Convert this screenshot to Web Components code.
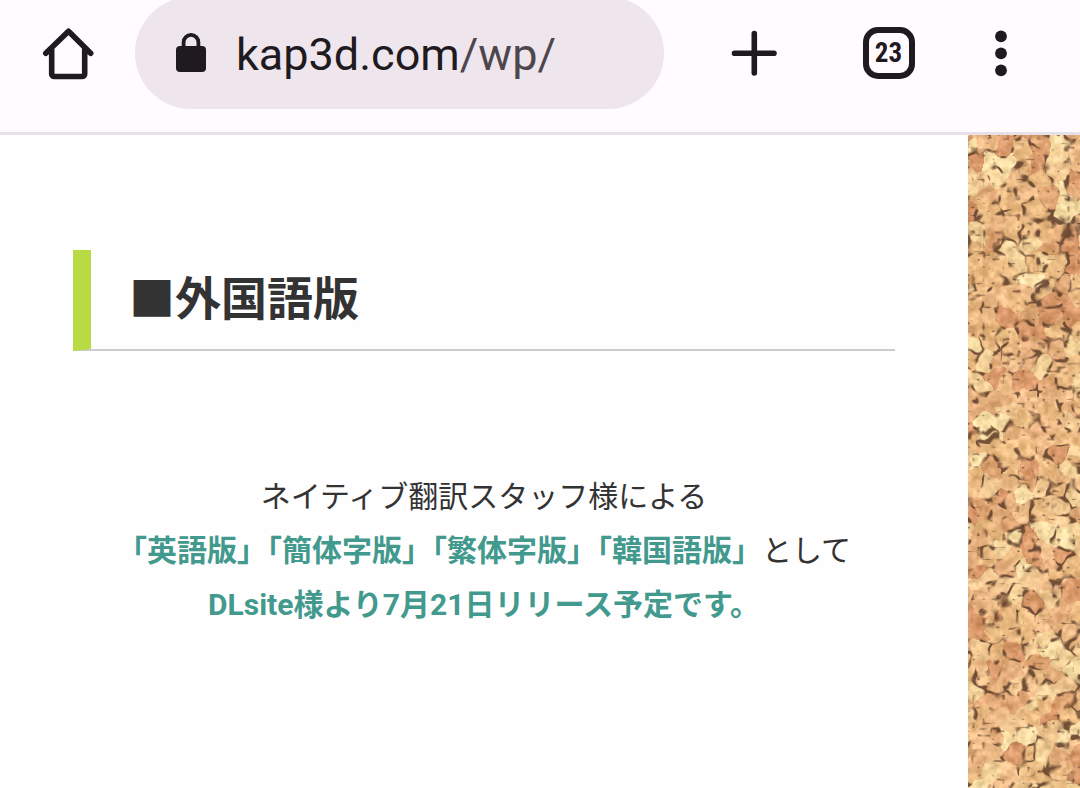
<!DOCTYPE html>
<html lang="ja">
<head>
<meta charset="utf-8">
<meta name="viewport" content="width=device-width, initial-scale=1">
<title>kap3d.com/wp/</title>
<style>
  html, body { margin: 0; min-height: 100%; }
  body { font-family: Roboto, "Noto Sans CJK JP", sans-serif; color: #333; background: #fffefe; }
</style>
</head>
<body>
<mobile-browser>
  <browser-toolbar slot="toolbar">
    <address-pill slot="address" host="kap3d.com" path="/wp/"></address-pill>
  </browser-toolbar>
  <article-section>
    <span slot="title">■外国語版</span>
    <release-note>
      ネイティブ翻訳スタッフ様による<br>
      <strong>「英語版」「簡体字版」「繁体字版」「韓国語版」</strong>として<br>
      <strong>DLsite様より7月21日リリース予定です。</strong>
    </release-note>
  </article-section>
  <cork-board slot="side"></cork-board>
</mobile-browser>

<script>
const define = (name, html, setup) => {
  const template = document.createElement('template');
  template.innerHTML = html;
  customElements.define(name, class extends HTMLElement {
    constructor() {
      super();
      this.attachShadow({ mode: 'open' }).append(template.content.cloneNode(true));
    }
    connectedCallback() { if (setup) setup(this, this.shadowRoot); }
  });
};

define('mobile-browser', `
  <style>
    :host { display: flex; flex-direction: column; min-height: 100vh; }
    .page { flex: 1; display: grid; grid-template-columns: minmax(0, 1fr) 112px; }
    main { background: #fffefe; }
  </style>
  <slot name="toolbar"></slot>
  <div class="page">
    <main><slot></slot></main>
    <slot name="side"></slot>
  </div>`);

define('browser-toolbar', `
  <style>
    :host { display: block; overflow: hidden; background: #fffbff; border-bottom: 3px solid #e7e0e8; color: #1f1a1f; }
    nav { display: flex; align-items: center; height: 106px; padding: 0 34px 26px 0; }
    ::slotted(*) { flex: 1; margin-right: 22px; }
    button { flex: none; width: 135px; height: 106px; padding: 0; border: 0; background: none; color: inherit;
      display: flex; align-items: center; justify-content: center; }
    .menu { width: 90px; }
    svg { display: block; width: 56px; height: 56px; overflow: visible; }
    .count { box-sizing: border-box; width: 52px; height: 52px; border: 6px solid; border-radius: 15px;
      display: flex; align-items: center; justify-content: center;
      font: bold 27px/40px "Roboto Condensed", Roboto, sans-serif; }
  </style>
  <nav aria-label="ブラウザ">
    <button aria-label="ホーム"><svg viewBox="0 0 56 56" fill="none" stroke="currentColor" stroke-width="5.6" stroke-linecap="round" stroke-linejoin="round"><path d="M5.800 28.300 28.500 6.300l22.200 22M11.700 24.500V49a2.500 2.500 0 0 0 2.500 2.500h28a2.500 2.500 0 0 0 2.500-2.500V24.500"/></svg></button>
    <slot name="address"></slot>
    <button aria-label="新しいタブ"><svg viewBox="0 0 56 56" fill="none" stroke="currentColor" stroke-width="5.6" stroke-linecap="round"><path d="M28.300 8.500v39.500M8.500 28.300h39.500"/></svg></button>
    <button aria-label="タブ一覧"><span class="count">23</span></button>
    <button class="menu" aria-label="メニュー"><svg viewBox="0 0 56 56" fill="currentColor"><circle cx="28" cy="11.300" r="5.900"/><circle cx="28" cy="28.300" r="5.900"/><circle cx="28" cy="45.300" r="5.900"/></svg></button>
  </nav>`);

define('address-pill', `
  <style>
    :host { display: block; min-width: 0; }
    button { box-sizing: border-box; display: flex; align-items: center; gap: 29px; width: 100%; height: 112px;
      padding: 4px 40px 0; border: 0; border-radius: 56px; background: #eee6ec; color: #1f1a1f;
      font: 400 45px/56px Roboto, sans-serif; text-align: left; white-space: nowrap; }
    svg { flex: none; width: 32px; height: 44px; }
    .path { color: #4e464d; }
  </style>
  <button aria-label="アドレスバー">
    <svg viewBox="0 0 32 44"><path fill="currentColor" d="M5 13h22a4 4 0 0 1 4 4v18a4 4 0 0 1-4 4H5a4 4 0 0 1-4-4V17a4 4 0 0 1 4-4Z"/><path fill="none" stroke="currentColor" stroke-width="3.8" d="M8.600 14V9.300a7.400 7.400 0 0 1 14.800 0V14"/></svg>
    <span><span class="host"></span><span class="path"></span></span>
  </button>`, (el, root) => {
  root.querySelector('.host').textContent = el.getAttribute('host');
  root.querySelector('.path').textContent = el.getAttribute('path');
});

define('article-section', `
  <style>
    :host { display: block; padding: 115px 73px 64px; }
    h2 { margin: 0 0 119px; padding: 18px 38px; border-left: 18px solid #b8db44; border-bottom: 2px solid #ccc;
      font-size: 46px; line-height: 63px; font-weight: bold; }
  </style>
  <section><h2><slot name="title"></slot></h2><slot></slot></section>`);

define('release-note', `
  <style>
    :host { display: block; font-size: 30px; line-height: 54px; text-align: center; }
    p { margin: 0; }
    ::slotted(strong) { font-weight: bold; color: #42998d; }
  </style>
  <p><slot></slot></p>`);

define('cork-board', `
  <style>
    :host { display: block; position: relative; overflow: hidden; background: #e2b57c; }
    canvas { position: absolute; inset: 0; width: 100%; height: 100%; }
  </style>
  <canvas aria-hidden="true"></canvas>`, (el, root) => {
  const canvas = root.querySelector('canvas');
  const rand = (x, y, k) => {
    let h = Math.imul(x, 374761393) ^ Math.imul(y, 668265263) ^ Math.imul(k, 1274126177);
    h = Math.imul(h ^ (h >>> 13), 1274126177);
    h = Math.imul(h ^ (h >>> 15), 2246822519);
    return ((h ^ (h >>> 16)) >>> 0) / 4294967296;
  };
  const smooth = (x, y, k) => {
    const i = Math.floor(x), j = Math.floor(y), u = x - i, v = y - j;
    const a = u * u * (3 - 2 * u), b = v * v * (3 - 2 * v);
    return (rand(i, j, k) * (1 - a) + rand(i + 1, j, k) * a) * (1 - b)
      + (rand(i, j + 1, k) * (1 - a) + rand(i + 1, j + 1, k) * a) * b;
  };
  const grains = [[238,192,136],[232,184,128],[242,207,150],[224,166,116],[247,220,164],[234,186,130],[216,152,106],[240,199,144],[228,174,124],[239,190,138]];
  const shadow = [92, 60, 40];
  const size = 17;
  const paint = () => {
    const w = el.clientWidth, h = el.clientHeight;
    if (!w || !h) return;
    canvas.width = w; canvas.height = h;
    const ctx = canvas.getContext('2d'), image = ctx.createImageData(w, h);
    for (let y = 0; y < h; y++) for (let x = 0; x < w; x++) {
      const px = (x + (smooth(x / 9, y / 9, 11) - .5) * 9) / size;
      const py = (y + (smooth(x / 9, y / 9, 12) - .5) * 9) / size;
      const ci = Math.floor(px), cj = Math.floor(py);
      let d1 = 9, d2 = 9, gi = 0, gj = 0;
      for (let j = cj - 1; j <= cj + 1; j++) for (let i = ci - 1; i <= ci + 1; i++) {
        const d = Math.hypot(i + rand(i, j, 1) - px, j + rand(i, j, 2) - py);
        if (d < d1) { d2 = d1; d1 = d; gi = i; gj = j; } else if (d < d2) d2 = d;
      }
      const base = grains[Math.floor(rand(gi, gj, 3) * grains.length)];
      const light = (smooth(x / 6, y / 6, 5) - .5) * 40 + (smooth(x / 3, y / 3, 6) - .5) * 26;
      const gap = Math.max(0, 1 - (d2 - d1) / .26);
      const dark = Math.min(.85, gap * Math.max(0, smooth(x / 7, y / 7, 7) - .5) * 3.6
        + Math.max(0, smooth(x / 5, y / 4, 8) - .8) * 3.5);
      const p = (y * w + x) * 4;
      for (let c = 0; c < 3; c++) image.data[p + c] = (base[c] + light) * (1 - dark) + shadow[c] * dark;
      image.data[p + 3] = 255;
    }
    ctx.putImageData(image, 0, 0);
  };
  paint();
  new ResizeObserver(() => {
    if (canvas.width !== el.clientWidth || canvas.height !== el.clientHeight) paint();
  }).observe(el);
});
</script>
</body>
</html>
